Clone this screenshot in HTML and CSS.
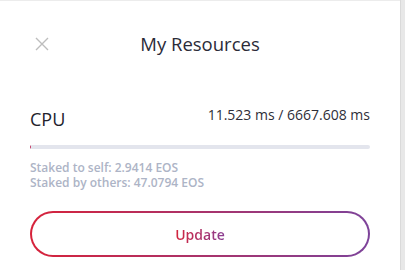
FILE: index.html
```html
<!DOCTYPE html>
<html lang="en">
<head>
    <meta charset="UTF-8">
    <meta name="viewport" content="width=device-width, initial-scale=1.0">
    <title>My Resources</title>
    <link rel="stylesheet" href="styles.css">
</head>
<body>
    <div class="page">
        <div class="panel">
            <div class="header">
                <button class="close-btn" aria-label="Close">
                    <svg width="14" height="14" viewBox="0 0 14 14" fill="none" xmlns="http://www.w3.org/2000/svg">
                        <path d="M1 1L13 13M13 1L1 13" stroke="currentColor" stroke-width="1.4"/>
                    </svg>
                </button>
                <h1>My Resources</h1>
            </div>

            <div class="resource">
                <div class="resource-head">
                    <span class="resource-name">CPU</span>
                    <span class="resource-value">11.523 ms / 6667.608 ms</span>
                </div>
                <div class="bar">
                    <div class="bar-fill" style="width: 0.3%;"></div>
                </div>
                <div class="stake">Staked to self: 2.9414 EOS</div>
                <div class="stake">Staked by others: 47.0794 EOS</div>
            </div>

            <button class="update-btn"><span>Update</span></button>
        </div>
        <div class="scrollbar"></div>
    </div>
</body>
</html>
```

FILE: styles.css
```css
* {
    margin: 0;
    padding: 0;
    box-sizing: border-box;
}

body {
    font-family: 'Open Sans', 'Noto Sans', sans-serif;
    background: white;
    width: 405px;
    height: 270px;
    overflow: hidden;
}

.page {
    display: flex;
    height: 270px;
}

.panel {
    width: 400px;
    border-top: 1px solid #ececec;
    padding: 0 30px;
}

.scrollbar {
    width: 5px;
    background: #e8e8e8;
    border-left: 1px solid #dadada;
}

.header {
    position: relative;
    display: flex;
    justify-content: center;
    padding-top: 31px;
    height: 100px;
}

.close-btn {
    position: absolute;
    left: 5px;
    top: 36px;
    background: none;
    border: none;
    color: #bdbdbd;
    display: flex;
}

h1 {
    font-size: 18.5px;
    font-weight: 400;
    color: #2b2b38;
    line-height: 24px;
}

.resource-head {
    display: flex;
    justify-content: space-between;
    align-items: flex-end;
    height: 31px;
}

.resource-name {
    font-size: 18px;
    color: #22222c;
    line-height: 26px;
}

.resource-value {
    font-size: 14px;
    color: #2e2e38;
    line-height: 26px;
    padding-bottom: 4px;
}

.bar {
    margin-top: 13px;
    height: 4px;
    border-radius: 2px;
    background: #e3e5ed;
    overflow: hidden;
    margin-bottom: 11px;
}

.bar-fill {
    height: 100%;
    background: #c0305a;
}

.stake {
    font-size: 12px;
    font-weight: 600;
    color: #adb4c6;
    line-height: 15px;
}

.update-btn {
    margin-top: 21px;
    width: 100%;
    height: 46px;
    border-radius: 23px;
    border: 2px solid transparent;
    background:
        linear-gradient(white, white) padding-box,
        linear-gradient(90deg, #d7223a 0%, #7d439a 100%) border-box;
    font-family: inherit;
    font-size: 14px;
    font-weight: 600;
    cursor: pointer;
}

.update-btn span {
    background: linear-gradient(90deg, #d4243c 0%, #8a3f94 100%);
    -webkit-background-clip: text;
    background-clip: text;
    color: transparent;
}
```
